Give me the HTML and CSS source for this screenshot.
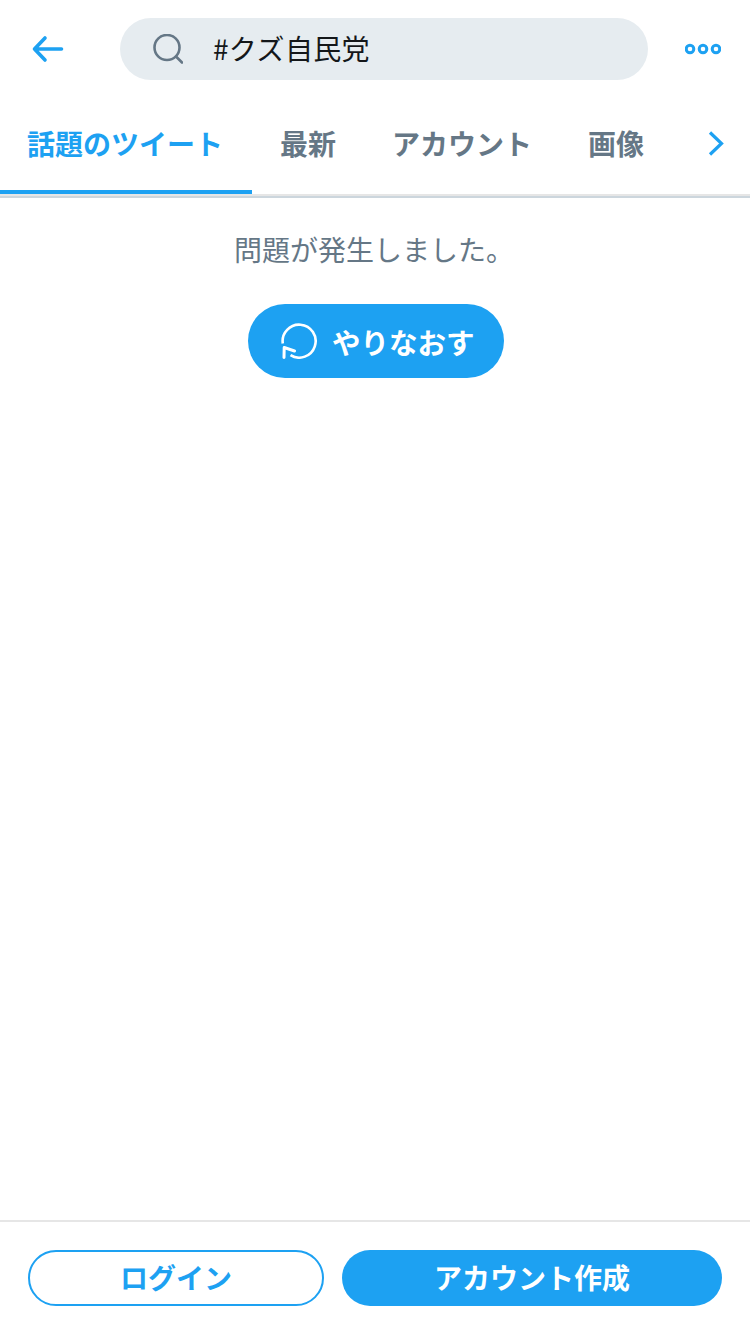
FILE: index.html
```html
<!DOCTYPE html>
<html lang="ja">
<head>
  <meta charset="UTF-8">
  <title>#クズ自民党</title>
  <link rel="stylesheet" href="styles.css">
</head>
<body>
  <div class="page">
    <header class="top-bar">
      <svg class="back-icon" width="32" height="28" viewBox="0 0 32 28">
        <path d="M13 3 L2.5 14 L13 25 M2.5 14 H29.5" fill="none" stroke="#1da1f2" stroke-width="3.6" stroke-linecap="round" stroke-linejoin="round"/>
      </svg>
      <div class="search-box">
        <svg class="search-icon" width="30" height="30" viewBox="0 0 30 30">
          <circle cx="14" cy="13.5" r="12.5" fill="none" stroke="#657786" stroke-width="2.6"/>
          <path d="M23.5 23 L29 28.5" fill="none" stroke="#657786" stroke-width="2.6" stroke-linecap="round"/>
        </svg>
        <span class="search-text">#クズ自民党</span>
      </div>
      <svg class="more-icon" width="36" height="12" viewBox="0 0 36 12">
        <circle cx="5" cy="6" r="3.8" fill="none" stroke="#1da1f2" stroke-width="3"/>
        <circle cx="18" cy="6" r="3.8" fill="none" stroke="#1da1f2" stroke-width="3"/>
        <circle cx="31" cy="6" r="3.8" fill="none" stroke="#1da1f2" stroke-width="3"/>
      </svg>
    </header>

    <nav class="tabs">
      <div class="tab tab-active">話題のツイート</div>
      <div class="tab tab-latest">最新</div>
      <div class="tab tab-account">アカウント</div>
      <div class="tab tab-image">画像</div>
      <svg class="tab-next" width="16" height="28" viewBox="0 0 16 28">
        <path d="M2 2.5 L13.5 13.5 L2 24.5" fill="none" stroke="#1da1f2" stroke-width="3.2"/>
      </svg>
    </nav>

    <main class="content">
      <p class="error-text">問題が発生しました。</p>
      <button class="retry-btn">
        <svg width="36" height="36" viewBox="0 0 36 36">
          <path d="M1.8 20.5 A16.5 16.5 0 1 1 9.5 32.2" fill="none" stroke="#fff" stroke-width="2.6"/>
          <path d="M3 34.5 L3.2 24.5 L13.5 28" fill="none" stroke="#fff" stroke-width="3" stroke-linecap="round" stroke-linejoin="round"/>
        </svg>
        <span>やりなおす</span>
      </button>
    </main>

    <footer class="bottom-bar">
      <button class="btn btn-login">ログイン</button>
      <button class="btn btn-signup">アカウント作成</button>
    </footer>
  </div>
</body>
</html>
```

FILE: styles.css
```css
html, body {
  margin: 0;
  padding: 0;
  background-color: #fff;
}

body {
  font-family: "Noto Sans CJK JP", "Liberation Sans", sans-serif;
}

.page {
  width: 750px;
  height: 1334px;
  display: flex;
  flex-direction: column;
  overflow: hidden;
}

.top-bar {
  height: 98px;
  display: flex;
  align-items: center;
  box-sizing: border-box;
  padding: 0 29px 0 32px;
}

.back-icon {
  flex: none;
  margin-right: 56px;
}

.search-box {
  width: 528px;
  height: 62px;
  flex: none;
  display: flex;
  align-items: center;
  box-sizing: border-box;
  padding-left: 33px;
  border-radius: 31px;
  background-color: #e6ecf0;
}

.search-text {
  margin-left: 30px;
  padding-bottom: 2px;
  font-size: 28px;
  line-height: 36px;
  letter-spacing: 0.3px;
  color: #14171a;
}

.more-icon {
  flex: none;
  margin-left: 37px;
}

.tabs {
  height: 100px;
  display: flex;
  align-items: flex-start;
  box-sizing: border-box;
  border-bottom: 2px solid #ccd6dd;
  box-shadow: inset 0 -2px 0 #e6e6e6;
}

.tab {
  line-height: 90px;
  font-size: 28px;
  font-weight: 700;
  color: #657786;
  white-space: nowrap;
}

.tab-active {
  width: 197px;
  height: 92px;
  padding: 0 28px 0 27px;
  color: #1da1f2;
  border-bottom: 4px solid #1da1f2;
}

.tab-latest {
  margin-left: 28px;
  width: 56px;
}

.tab-account {
  margin-left: 56px;
  width: 140px;
}

.tab-image {
  margin-left: 56px;
  width: 56px;
}

.tab-next {
  flex: none;
  margin: 32px 0 0 64px;
}

.content {
  flex: 1;
  display: flex;
  flex-direction: column;
  align-items: center;
  padding-top: 32px;
}

.error-text {
  margin: -1px 2px 1px 0;
  font-size: 28px;
  line-height: 40px;
  color: #657786;
}

.retry-btn {
  width: 256px;
  height: 74px;
  margin: 34px 0 0 2px;
  display: flex;
  align-items: center;
  gap: 15px;
  padding: 0 0 0 33px;
  border: none;
  border-radius: 37px;
  background-color: #1da1f2;
  color: #fff;
  font-family: inherit;
  font-size: 28.5px;
  font-weight: 700;
}

.bottom-bar {
  height: 114px;
  display: flex;
  gap: 18px;
  box-sizing: border-box;
  padding: 28px 28px 0;
  border-top: 2px solid #e6e6e6;
}

.btn {
  height: 56px;
  box-sizing: border-box;
  border-radius: 28px;
  font-family: inherit;
  font-size: 28px;
  font-weight: 700;
  padding: 0 0 2px;
}

.btn-login {
  width: 296px;
  background-color: #fff;
  color: #1da1f2;
  border: 2px solid #1da1f2;
}

.btn-signup {
  width: 380px;
  background-color: #1da1f2;
  color: #fff;
  border: none;
}
```
